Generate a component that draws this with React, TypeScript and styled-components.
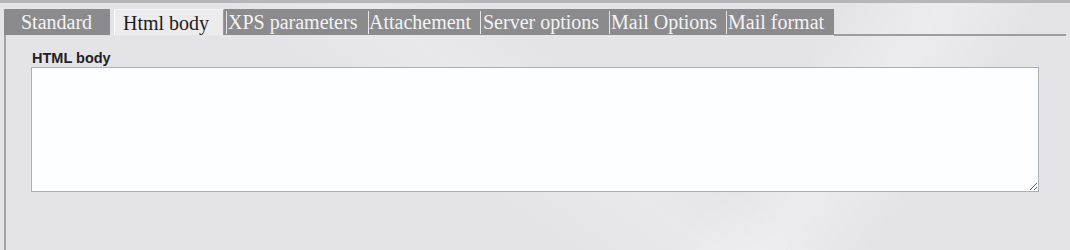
import React, { useState } from 'react';
import styled, { createGlobalStyle } from 'styled-components';

const GlobalStyle = createGlobalStyle`
  html, body {
    margin: 0;
    padding: 0;
    background: #e6e6ea;
  }
`;

const tabs = [
  { label: 'Standard', width: 106, pad: 17 },
  { label: 'Html body', width: 110, pad: 8 },
  { label: 'XPS parameters', width: 142, pad: 4 },
  { label: 'Attachement', width: 112, pad: 3 },
  { label: 'Server options', width: 129, pad: 5 },
  { label: 'Mail Options', width: 117, pad: 4 },
  { label: 'Mail format', width: 110, pad: 4 },
];

const Page = styled.div`
  height: 250px;
  overflow: hidden;
  background:
    linear-gradient(125deg, rgba(255, 255, 255, 0) 68%, rgba(255, 255, 255, 0.3) 76%, rgba(255, 255, 255, 0) 84%),
    linear-gradient(35deg, rgba(255, 255, 255, 0) 40%, rgba(255, 255, 255, 0.18) 50%, rgba(255, 255, 255, 0) 58%),
    #e4e4e8;
`;

const TopStrip = styled.div`
  height: 3px;
  background: #b6b6ba;
`;

const TabStrip = styled.div`
  display: flex;
  align-items: flex-end;
  height: 26px;
  margin: 6px 4px 0 4px;
`;

const Tab = styled.div<{ $active?: boolean; $w: number; $pad: number; $first?: boolean }>`
  position: relative;
  box-sizing: border-box;
  width: ${p => p.$w}px;
  height: 26px;
  padding-left: ${p => p.$pad}px;
  margin-right: ${p => (p.$first ? 4 : 0)}px;
  font-family: 'Liberation Serif', 'Times New Roman', serif;
  font-size: 20px;
  line-height: 27px;
  white-space: nowrap;
  cursor: pointer;
  color: ${p => (p.$active ? '#1c1c1c' : '#f4f4f4')};
  background: ${p => (p.$active ? '#ececef' : '#8b8b8d')};
  border-left: ${p => (p.$active ? '1px solid #ffffff' : 'none')};
  border-top: ${p => (p.$active ? '1px solid #f6f6f6' : 'none')};
  border-right: ${p => (p.$active ? '1px solid #9a9a9c' : 'none')};

  &::before {
    content: '';
    display: ${p => (p.$active || p.$first ? 'none' : 'block')};
    position: absolute;
    left: 2px;
    top: 2px;
    bottom: 1px;
    width: 1px;
    background: #e6e6e6;
  }
`;

const Filler = styled.div`
  flex: 1;
  height: 26px;
  box-sizing: border-box;
  border-bottom: 2px solid #9d9d9f;
  margin-bottom: -1px;
`;

const Panel = styled.div`
  margin: 0 4px;
  height: 220px;
  box-sizing: border-box;
  border-left: 2px solid #a4a4a7;
  padding: 15px 27px 0 25px;
`;

const Label = styled.div`
  font-family: 'Liberation Sans', Arial, sans-serif;
  font-weight: bold;
  font-size: 14.5px;
  line-height: 17px;
  color: #222226;
  margin-left: 1px;
`;

const Body = styled.textarea`
  display: block;
  box-sizing: border-box;
  width: 100%;
  height: 125px;
  margin-top: 0;
  border: 1px solid #a9b0b8;
  background: #fdfeff;
  font-family: 'Liberation Sans', Arial, sans-serif;
  font-size: 13px;
  outline: none;
`;

export default function App() {
  const [active, setActive] = useState(1);

  return (
    <Page>
      <GlobalStyle />
      <TopStrip />
      <TabStrip>
        {tabs.map((t, i) => (
          <Tab
            key={t.label}
            $w={t.width}
            $pad={t.pad}
            $first={i === 0}
            $active={i === active}
            onClick={() => setActive(i)}
          >
            {t.label}
          </Tab>
        ))}
        <Filler />
      </TabStrip>
      <Panel>
        <Label>HTML body</Label>
        <Body />
      </Panel>
    </Page>
  );
}
